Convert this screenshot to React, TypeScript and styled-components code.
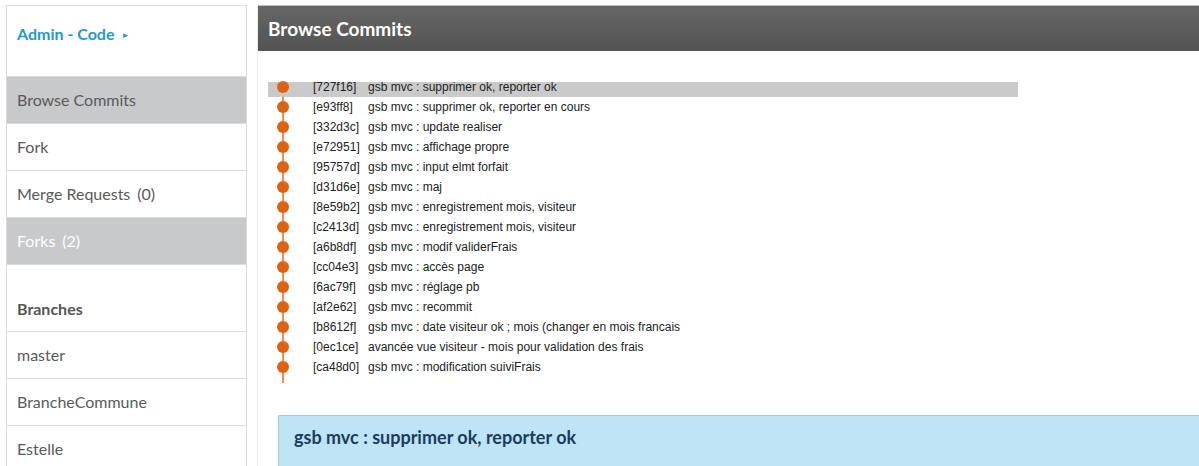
import React from 'react';
import styled, {createGlobalStyle} from "styled-components";

type CommitType = {
    hash: string
    message: string
}

const commits: Array<CommitType> = [
    {hash: '727f16', message: 'gsb mvc : supprimer ok, reporter ok'},
    {hash: 'e93ff8', message: 'gsb mvc : supprimer ok, reporter en cours'},
    {hash: '332d3c', message: 'gsb mvc : update realiser'},
    {hash: 'e72951', message: 'gsb mvc : affichage propre'},
    {hash: '95757d', message: 'gsb mvc : input elmt forfait'},
    {hash: 'd31d6e', message: 'gsb mvc : maj'},
    {hash: '8e59b2', message: 'gsb mvc : enregistrement mois, visiteur'},
    {hash: 'c2413d', message: 'gsb mvc : enregistrement mois, visiteur'},
    {hash: 'a6b8df', message: 'gsb mvc : modif validerFrais'},
    {hash: 'cc04e3', message: 'gsb mvc : accès page'},
    {hash: '6ac79f', message: 'gsb mvc : réglage pb'},
    {hash: 'af2e62', message: 'gsb mvc : recommit'},
    {hash: 'b8612f', message: 'gsb mvc : date visiteur ok ; mois (changer en mois francais'},
    {hash: '0ec1ce', message: 'avancée vue visiteur - mois pour validation des frais'},
    {hash: 'ca48d0', message: 'gsb mvc : modification suiviFrais'},
]

const App = () => {
    return <Page>
        <GlobalStyle/>
        <Sidebar>
            <ProjectTitle>
                Admin - Code <Arrow>►</Arrow>
            </ProjectTitle>
            <NavItem active>Browse Commits</NavItem>
            <NavItem>Fork</NavItem>
            <NavItem>Merge Requests <Count>(0)</Count></NavItem>
            <NavItem active light>Forks <Count>(2)</Count></NavItem>
            <SectionTitle>Branches</SectionTitle>
            <NavItem>master</NavItem>
            <NavItem>BrancheCommune</NavItem>
            <NavItem>Estelle</NavItem>
        </Sidebar>

        <Main>
            <PanelHeader>Browse Commits</PanelHeader>
            <CommitList>
                <Graph/>
                {commits.map((c, i) => (
                    <CommitRow key={c.hash} selected={i === 0}>
                        <Dot/>
                        <Hash>[{c.hash}]</Hash>
                        <Message>{c.message}</Message>
                    </CommitRow>
                ))}
            </CommitList>
            <DetailBox>
                <DetailTitle>gsb mvc : supprimer ok, reporter ok</DetailTitle>
            </DetailBox>
        </Main>
    </Page>
}

export default App

const GlobalStyle = createGlobalStyle`
  html, body {
    margin: 0;
    padding: 0;
    background: #fff;
    overflow: hidden;
  }
  body {
    font-family: Lato, "Liberation Sans", sans-serif;
  }
`
const Page = styled.div`
  display: flex;
  align-items: flex-start;
  gap: 10px;
  padding: 5px 0 0 6px;
  height: 466px;
  box-sizing: border-box;
  overflow: hidden;
`
const Sidebar = styled.div`
  width: 241px;
  flex-shrink: 0;
  border: 1px solid #dcdcdc;
  border-bottom: none;
  box-sizing: border-box;
  background: #fff;
`
const ProjectTitle = styled.div`
  height: 71px;
  box-sizing: border-box;
  padding: 18px 0 0 10px;
  font-size: 16px;
  font-weight: 700;
  color: #1f9acd;
  border-bottom: 1px solid #dcdcdc;
`
const Arrow = styled.span`
  font-size: 8px;
  margin-left: 3px;
  vertical-align: 2px;
`
const NavItem = styled.div<{ active?: boolean, light?: boolean }>`
  height: 47px;
  box-sizing: border-box;
  display: flex;
  align-items: center;
  padding: 0 0 1px 10px;
  font-size: 16px;
  color: ${p => p.light ? '#ffffff' : '#5a5a5a'};
  background: ${p => p.active ? '#c8c9ca' : '#fff'};
  border-bottom: 1px solid #dcdcdc;
`
const Count = styled.span`
  margin-left: 7px;
`
const SectionTitle = styled.div`
  height: 67px;
  box-sizing: border-box;
  display: flex;
  align-items: flex-end;
  padding: 0 0 13px 10px;
  font-size: 16px;
  font-weight: 700;
  color: #555;
  border-bottom: 1px solid #dcdcdc;
`
const Main = styled.div`
  flex: 1;
  min-width: 0;
  border-left: 1px solid #ececec;
  height: 500px;
`
const PanelHeader = styled.div`
  height: 46px;
  box-sizing: border-box;
  display: flex;
  align-items: center;
  padding: 0 0 1px 10px;
  background: linear-gradient(to bottom, #666666, #535353);
  border-top: 1px solid #bdbdbd;
  color: #fff;
  font-size: 19px;
  font-weight: 700;
`
const CommitList = styled.div`
  position: relative;
  width: 750px;
  margin: 26px 0 0 10px;
  padding-bottom: 6px;
  font-family: "Liberation Sans", Arial, sans-serif;
  font-size: 12px;
  color: #222;
`
const Graph = styled.div`
  position: absolute;
  left: 14px;
  top: 10px;
  bottom: 0;
  width: 2px;
  background: #eb8d4c;
`
const CommitRow = styled.div<{ selected?: boolean }>`
  position: relative;
  height: 20px;
  display: flex;
  align-items: center;
  box-sizing: border-box;
  background: ${p => p.selected
          ? 'linear-gradient(to bottom, transparent 5px, #cacaca 5px)'
          : 'transparent'};
`
const Dot = styled.span`
  position: absolute;
  left: 9px;
  top: 4px;
  width: 12px;
  height: 12px;
  border-radius: 50%;
  background: #e0620e;
`
const Hash = styled.span`
  width: 55px;
  margin-left: 45px;
  flex-shrink: 0;
`
const Message = styled.span`
  white-space: nowrap;
`
const DetailBox = styled.div`
  margin: 32px 0 0 20px;
  height: 80px;
  background: #bee4f6;
  border: 1px solid #a8c6d6;
  border-right: none;
  border-radius: 2px 0 0 0;
  padding: 10px 0 0 15px;
  box-sizing: border-box;
`
const DetailTitle = styled.div`
  font-size: 18px;
  font-weight: 700;
  color: #1b3d5d;
`
